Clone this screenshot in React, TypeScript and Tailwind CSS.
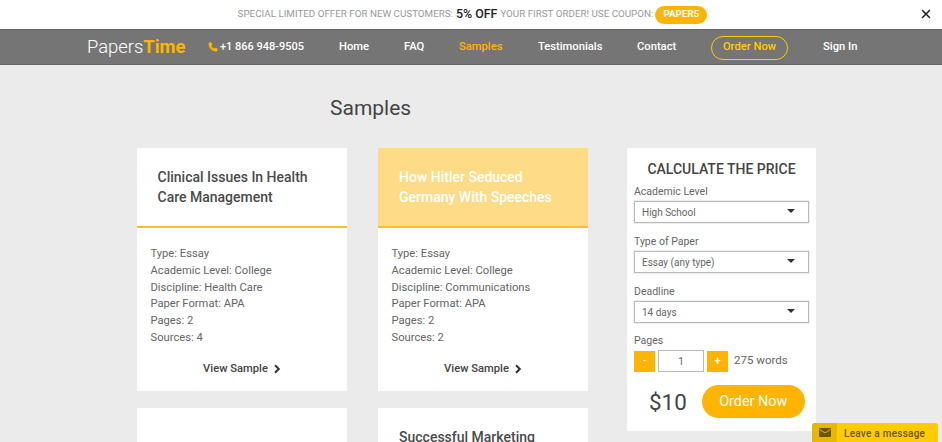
import { Phone, X } from "lucide-react";

const cards = [
  {
    title: ["Clinical Issues In Health", "Care Management"],
    rows: ["Type: Essay", "Academic Level: College", "Discipline: Health Care", "Paper Format: APA", "Pages: 2", "Sources: 4"],
  },
  {
    title: ["How Hitler Seduced", "Germany With Speeches"],
    rows: ["Type: Essay", "Academic Level: College", "Discipline: Communications", "Paper Format: APA", "Pages: 2", "Sources: 2"],
    active: true,
  },
];

function Card({ title, rows, active }: { title: string[]; rows: string[]; active?: boolean }) {
  return (
    <div className="w-[210px] h-[243px] bg-white flex flex-col">
      <div
        className={
          active
            ? "h-[80px] shrink-0 border-b-2 border-[#fdbd2c] bg-[#fedb86] pl-[21px] pt-[19px] text-[14px] leading-[20px] font-medium text-white"
            : "h-[80px] shrink-0 border-b-2 border-[#fdbd2c] bg-white pl-[20.5px] pt-[19px] text-[14px] leading-[20px] font-medium text-[#4a4a4a]"
        }
      >
        {title.map((line) => (
          <div key={line}>{line}</div>
        ))}
      </div>
      <div className="pl-[13.5px] pt-[18px] text-[11.2px] leading-[16.8px] text-[#666]">
        {rows.map((row) => (
          <div key={row}>{row}</div>
        ))}
      </div>
      <div className="mt-[14px] flex items-center justify-center gap-[5px] text-[11.2px] font-medium text-[#444]">
        <span>View Sample</span>
        <svg width="8" height="10" viewBox="0 0 8 10" fill="none" stroke="#333" strokeWidth="2">
          <path d="M2 1.2 L5.8 5 L2 8.8" />
        </svg>
      </div>
    </div>
  );
}

function Select({ label, value, last }: { label: string; value: string; last?: boolean }) {
  return (
    <div className={last ? "mb-[10px]" : "mb-[11px]"}>
      <div className="text-[10.5px] leading-[15px] text-[#666] mb-[2px]">{label}</div>
      <div className="h-[22px] w-[175px] border border-[#bbb] shadow-[0_0_0_0.5px_#ddd] flex items-center justify-between pl-[7px] pr-[13px] text-[10px] text-[#666]">
        <span>{value}</span>
        <span className="mb-[2px] w-0 h-0 border-x-[4px] border-x-transparent border-t-[4px] border-t-[#333]" />
      </div>
    </div>
  );
}

export default function App() {
  return (
    <div className="h-[442px] overflow-hidden bg-[#ebebeb] font-['Roboto',sans-serif] relative">
      <div className="h-[29px] bg-white flex items-center justify-center relative pl-[3px]">
        <span className="text-[9.8px] text-[#999]">SPECIAL LIMITED OFFER FOR NEW CUSTOMERS:</span>
        <span className="ml-[3px] text-[12.4px] font-medium text-[#222]">5% OFF</span>
        <span className="ml-[3px] text-[9.8px] text-[#999]">YOUR FIRST ORDER! USE COUPON:</span>
        <span className="ml-[2px] h-[18px] w-[52px] rounded-full bg-[#ffb400] text-white text-[9.8px] font-bold flex items-center justify-center">PAPER5</span>
        <X className="absolute right-[9px] top-[7px] text-[#222]" size={14} strokeWidth={2.5} />
      </div>

      <div className="h-[36px] bg-[#757575] border-y border-[#666] flex items-center text-white text-[11.2px] font-medium">
        <div className="ml-[87px] w-[121px] text-[18.4px]">
          <span className="font-light">Papers</span>
          <span className="font-bold text-[#ffb400]">Time</span>
        </div>
        <div className="flex items-center w-[131px]">
          <Phone className="text-[#ffb400] mr-[2px]" size={10} fill="#ffb400" />
          <span className="text-[11px]">+1 866 948-9505</span>
        </div>
        <span className="w-[65px]">Home</span>
        <span className="w-[55px]">FAQ</span>
        <span className="w-[79px] text-[#ffb400]">Samples</span>
        <span className="w-[99px]">Testimonials</span>
        <span className="w-[74px]">Contact</span>
        <span className="w-[77px] h-[24px] mt-[1px] rounded-full border border-[#ffcc00] text-[#ffcc00] flex items-center justify-center">Order Now</span>
        <span className="ml-[35px]">Sign In</span>
      </div>

      <div className="flex pl-[137px] pt-[83px] relative">
        <h1 className="absolute left-[330px] top-[28px] text-[21px] text-[#444]">Samples</h1>
        <div className="grid grid-cols-[210px_210px] gap-x-[31px] gap-y-[17px]">
          {cards.map((card) => (
            <Card key={card.title[0]} {...card} />
          ))}
          <div className="h-[200px] bg-white" />
          <div className="h-[200px] bg-white pl-[21px] pt-[19px] text-[14px] leading-[20px] font-medium text-[#4a4a4a]">Successful Marketing</div>
        </div>

        <div className="ml-[39px] w-[189px] h-[283px] bg-white px-[7px] self-start">
          <div className="pt-[13px] mb-[7px] text-center text-[14px] leading-[16px] font-medium text-[#444]">CALCULATE THE PRICE</div>
          <Select label="Academic Level" value="High School" />
          <Select label="Type of Paper" value="Essay (any type)" />
          <Select label="Deadline" value="14 days" last />
          <div className="text-[10.5px] leading-[15px] text-[#666] mb-[2px]">Pages</div>
          <div className="flex items-center">
            <div className="size-[21px] bg-[#ffb400] text-white text-[11px] font-medium flex items-center justify-center">-</div>
            <div className="ml-[3px] w-[46px] h-[22px] border border-[#bbb] text-[10px] text-[#666] flex items-center justify-center">1</div>
            <div className="ml-[3px] size-[21px] bg-[#ffb400] text-white text-[11px] font-medium flex items-center justify-center">+</div>
            <span className="ml-[6px] text-[11.5px] text-[#666]">275 words</span>
          </div>
          <div className="flex items-center mt-[13px]">
            <span className="ml-[15px] text-[22.4px] leading-[32px] text-[#444]">$10</span>
            <div className="ml-[15px] w-[103px] h-[33px] rounded-full bg-[#ffb400] text-white text-[14.4px] flex items-center justify-center">Order Now</div>
          </div>
        </div>
      </div>

      <div className="absolute left-[812px] bottom-0 w-[126px] h-[19px] rounded-t-[3px] bg-[#ffcc00] flex items-center text-[10px] font-medium tracking-[0.25px] text-[#6b5500]">
        <div className="w-[25px] h-full bg-[#e6b800] rounded-tl-[3px] flex items-center justify-center">
          <svg width="12" height="9" viewBox="0 0 12 9">
            <rect width="12" height="9" rx="1" fill="#6b5500" />
            <path d="M0.5 1.5 L6 5 L11.5 1.5" fill="none" stroke="#e6b800" strokeWidth="1" />
          </svg>
        </div>
        <span className="ml-[7px] pt-[1px]">Leave a message</span>
      </div>
    </div>
  );
}
